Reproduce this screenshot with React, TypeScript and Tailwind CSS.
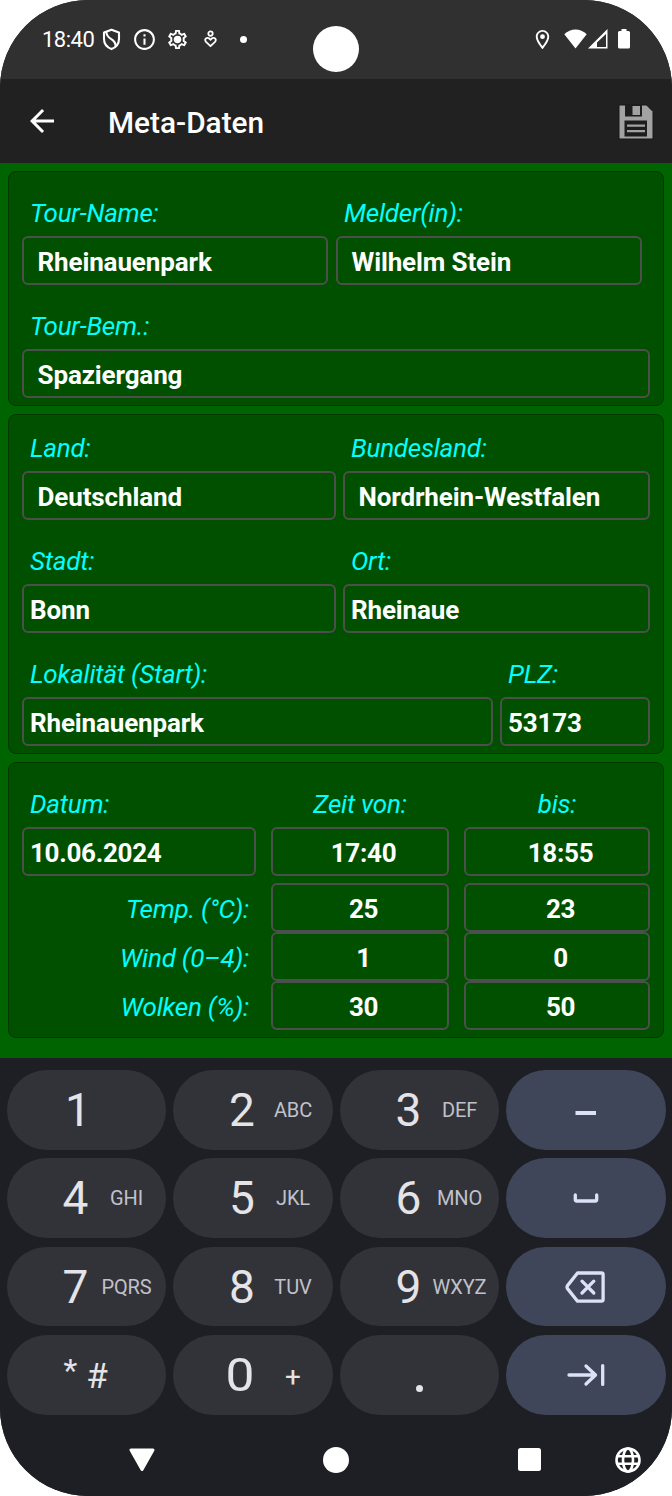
import type { ReactNode } from "react";
import { MdArrowBack, MdInfoOutline, MdOutlineLocationOn, MdOutlineSettings } from "react-icons/md";

function Slot({ children }: { children: ReactNode }) {
  return <span className="flex h-6 w-[33px] shrink-0 items-center justify-center">{children}</span>;
}

function ShieldIcon() {
  return (
    <svg width="19" height="23" viewBox="0 0 19 23" fill="none" stroke="currentColor" strokeWidth="2.1" strokeLinejoin="round">
      <path d="M9.5 1.8 17 4.6v6.2c0 4.8-3 8.6-7.5 10.3C5 19.4 2 15.6 2 10.8V4.6Z" />
      <path d="M4.3 4c.2 3.6 2 5.4 5 7.2 2.8 1.7 4.2 3.6 4.4 7" />
    </svg>
  );
}

function CareIcon() {
  return (
    <svg width="13" height="18" viewBox="0 0 13 18" fill="none" stroke="currentColor" strokeWidth="1.8">
      <circle cx="6.5" cy="3.6" r="2.2" />
      <path d="M6.5 16.2 2 11.8C.4 10 1.500 7.900 3.400 7.900c1.300 0 2.300.7 3.100 2 .8-1.300 1.800-2 3.100-2 1.900 0 3 2.100 1.400 3.900Z" strokeLinejoin="round" />
    </svg>
  );
}

function StatusBar() {
  return (
    <div className="relative flex h-[79px] shrink-0 items-start bg-[#303030] pl-[42px] text-white">
      <span className="mt-[26px] w-[53px] text-[22px] leading-[28px] tracking-[-0.5px]">18:40</span>
      <div className="mt-[27px] flex">
        <Slot><ShieldIcon /></Slot>
        <Slot><MdInfoOutline size={25} /></Slot>
        <Slot>
          <span className="relative flex items-center justify-center">
            <MdOutlineSettings size={23} />
            <span className="absolute size-[6px] rounded-full bg-white" />
          </span>
        </Slot>
        <Slot><CareIcon /></Slot>
        <Slot><span className="size-[7px] rounded-full bg-white" /></Slot>
      </div>
      <div className="mt-[27px] mr-[41px] ml-auto flex h-6 items-center">
        <MdOutlineLocationOn size={23} />
        <svg className="ml-[10px]" width="23" height="20" viewBox="0 0 23 20" fill="currentColor">
          <path d="M11.500 19.500.3 5.300C3.500 2.200 7.300.5 11.500.5s8 1.700 11.200 4.800Z" />
        </svg>
        <svg className="ml-[1px]" width="20" height="20" viewBox="0 0 20 20" fill="currentColor">
          <path fillRule="evenodd" d="M0 19.500 19.500 0v19.500ZM9 18h9V5L9 13.500Z" />
        </svg>
        <svg className="ml-[9px]" width="14" height="20" viewBox="0 0 14 20" fill="currentColor">
          <path d="M4.500 0h5v2h2q1.500 0 1.500 1.500v14.500q0 1.500-1.500 1.500h-9Q1 19.500 1 18V3.500Q1 2 2.500 2h2Z" />
        </svg>
      </div>
      <span className="absolute top-[26px] left-[313px] size-[46px] rounded-full bg-white" />
    </div>
  );
}

function SaveIcon() {
  return (
    <svg width="36" height="36" viewBox="0 0 36 36">
      <path d="M1 1h27.500L35 7.500V35H1Z" fill="#a2a2a2" stroke="#161616" />
      <path d="M7 1h17v11.500H7Z" fill="#1d1d1d" />
      <path d="M14.500 2h7.500v9h-7.500Z" fill="#a2a2a2" />
      <path d="M6.500 16.500H29V32.500H6.500Z" fill="#1d1d1d" />
      <path d="M9 21.700h18M9 27.200h18" stroke="#a2a2a2" strokeWidth="2.200" />
    </svg>
  );
}

function Toolbar() {
  return (
    <header className="flex h-[84px] shrink-0 items-center bg-[#212121] pr-[18px] pl-[24px] text-white">
      <MdArrowBack size={36} />
      <h1 className="ml-[48px] pt-[3px] text-[29.800px] leading-9 font-medium">Meta-Daten</h1>
      <span className="ml-auto pt-px"><SaveIcon /></span>
    </header>
  );
}

function Box({ children, className = "" }: { children: ReactNode; className?: string }) {
  return (
    <div className={`flex h-[49px] shrink-0 items-center rounded-[6px] border-2 border-[#4c4f4c] pt-[2px] font-bold text-white ${className}`}>
      {children}
    </div>
  );
}

function Label({ children, className = "" }: { children: ReactNode; className?: string }) {
  return <div className={`h-8 tracking-[-0.24px] whitespace-nowrap text-[#00ffff] italic ${className}`}>{children}</div>;
}

function Field({ label, value, className, indent = false }: { label: string; value: string; className: string; indent?: boolean }) {
  return (
    <div className={`flex shrink-0 flex-col gap-[7px] ${className}`}>
      <Label className="pl-2">{label}</Label>
      <Box className={indent ? "pl-[13.500px] tracking-[-0.12px]" : "pl-[6px] tracking-[-0.15px]"}>{value}</Box>
    </div>
  );
}

function Panel({ children, className }: { children: ReactNode; className: string }) {
  return (
    <section className={`flex shrink-0 flex-col rounded-lg border border-[#003600] bg-[#005000] pl-[13px] text-[26px] leading-8 ${className}`}>
      {children}
    </section>
  );
}

function Measure({ label, from, to }: { label: string; from: string; to: string }) {
  return (
    <div className="flex items-center">
      <Label className="mt-[2px] w-[249px] pr-[22px] text-right">{label}</Label>
      <Box className="w-[178px] justify-center pl-[7px] tracking-[-0.3px]">{from}</Box>
      <Box className="ml-[15px] w-[186px] justify-center pl-[7px] tracking-[-0.3px]">{to}</Box>
    </div>
  );
}

function Key({
  digit,
  letters,
  digitClass = "",
  lettersClass = "text-[20px] text-[#c0c1ca]",
}: {
  digit: string;
  letters?: string;
  digitClass?: string;
  lettersClass?: string;
}) {
  return (
    <button className="flex h-[79.500px] items-center rounded-[40px] bg-[#323338] pl-[50px]">
      <span className={`w-[38px] text-center text-[46px] leading-none text-[#e3e3e8] ${digitClass}`}>{digit}</span>
      <span className={`w-[64px] text-center tracking-[-0.1px] ${lettersClass}`}>{letters}</span>
    </button>
  );
}

function ActionKey({ children }: { children: ReactNode }) {
  return (
    <button className="flex h-[79.500px] items-center justify-center rounded-[40px] bg-[#404659] text-[#dce1f9]">
      <svg width="42" height="36" viewBox="0 0 42 36" fill="none" stroke="currentColor" strokeWidth="3.300" strokeLinecap="round" strokeLinejoin="round">
        {children}
      </svg>
    </button>
  );
}

function Keyboard() {
  return (
    <div className="flex grow flex-col bg-[#1e1f25] pt-3">
      <div className="grid grid-cols-4 gap-x-[7px] gap-y-[8.900px] pr-[6.500px] pl-[6.500px]">
        <Key digit="1" digitClass="pl-[5px]" />
        <Key digit="2" letters="ABC" />
        <Key digit="3" letters="DEF" />
        <ActionKey><path d="M10.500 21h20.500" strokeLinecap="butt" strokeWidth="4" /></ActionKey>
        <Key digit="4" letters="GHI" />
        <Key digit="5" letters="JKL" />
        <Key digit="6" letters="MNO" />
        <ActionKey><path d="M10.300 15v4.500q0 1.500 1.500 1.500h18.400q1.500 0 1.500-1.500V15" /></ActionKey>
        <Key digit="7" letters="PQRS" />
        <Key digit="8" letters="TUV" />
        <Key digit="9" letters="WXYZ" />
        <ActionKey>
          <path d="M12.500 4h24q1.600 0 1.600 1.600v25q0 1.600-1.600 1.600h-24L2.500 19.600q-1-1.500 0-3Z" />
          <path d="m17 12.200 11.800 11.800M28.800 12.200 17 24" />
        </ActionKey>
        <button className="flex h-[79.500px] items-center rounded-[40px] bg-[#323338] pl-[57px] text-[#e3e3e8]">
          <span className="pb-[10px] text-[32px] leading-none">*</span>
          <span className="pt-[3px] pl-[9px] text-[35px] leading-none">#</span>
        </button>
        <Key digit="0" digitClass="scale-x-112 -ml-[2px] mr-[2px]" letters="+" lettersClass="pt-1 text-[28px] text-[#e3e3e8]" />
        <button className="flex h-[79.500px] items-center justify-center rounded-[40px] bg-[#323338] pt-[27px]">
          <span className="size-[7px] rounded-full bg-[#e3e3e8]" />
        </button>
        <ActionKey>
          <path d="M4 18h26.500M21 9l9.500 9-9.500 9M37.700 8.600v18.800" />
        </ActionKey>
      </div>
      <nav className="mt-[32.300px] flex h-[26px] items-center pl-[129px] text-white">
        <svg width="26" height="24" viewBox="0 0 26 24" fill="currentColor" stroke="currentColor" strokeWidth="3" strokeLinejoin="round">
          <path d="M2 2h22L13 21.500Z" />
        </svg>
        <span className="ml-[167.500px] size-[26px] rounded-full bg-white" />
        <span className="ml-[169.500px] size-[23px] rounded-[2.500px] bg-white" />
        <svg className="ml-[74px]" width="26" height="26" viewBox="0 0 26 26" fill="none" stroke="currentColor" strokeWidth="2.600">
          <circle cx="13" cy="13" r="11.500" />
          <ellipse cx="13" cy="13" rx="5" ry="11.500" />
          <path d="M2 9.300h22M2 16.700h22" />
        </svg>
      </nav>
    </div>
  );
}

export default function App() {
  return (
    <div className="flex h-[1496px] w-[672px] flex-col overflow-hidden rounded-[88px] bg-[#1e1f25] font-['Roboto','Liberation_Sans',sans-serif]">
      <StatusBar />
      <Toolbar />
      <main className="flex h-[895px] shrink-0 flex-col gap-2 bg-[#006400] px-2 pt-2">
        <Panel className="h-[235px] gap-[25px] pt-[25px]">
          <div className="flex gap-2">
            <Field className="w-[306px]" label="Tour-Name:" value="Rheinauenpark" indent />
            <Field className="w-[306px]" label="Melder(in):" value="Wilhelm Stein" indent />
          </div>
          <Field className="w-[628px]" label="Tour-Bem.:" value="Spaziergang" indent />
        </Panel>
        <Panel className="h-[340px] gap-[25px] pt-[17px]">
          <div className="flex gap-[7px]">
            <Field className="w-[314px]" label="Land:" value="Deutschland" indent />
            <Field className="w-[307px]" label="Bundesland:" value="Nordrhein-Westfalen" indent />
          </div>
          <div className="flex gap-[7px]">
            <Field className="w-[314px]" label="Stadt:" value="Bonn" />
            <Field className="w-[307px]" label="Ort:" value="Rheinaue" />
          </div>
          <div className="flex gap-[7px]">
            <Field className="w-[471px]" label="Lokalität (Start):" value="Rheinauenpark" />
            <Field className="w-[150px]" label="PLZ:" value="53173" />
          </div>
        </Panel>
        <Panel className="h-[276px] pt-[25px]">
          <div className="flex">
            <Label className="w-[249px] pl-2">Datum:</Label>
            <Label className="w-[178px] text-center">Zeit von:</Label>
            <Label className="ml-[15px] w-[186px] text-center">bis:</Label>
          </div>
          <div className="mt-[7px] mb-[7px] flex">
            <Box className="w-[234px] pl-[6px] tracking-[-0.3px]">10.06.2024</Box>
            <Box className="ml-[15px] w-[178px] justify-center pl-[7px] tracking-[-0.3px]">17:40</Box>
            <Box className="ml-[15px] w-[186px] justify-center pl-[7px] tracking-[-0.3px]">18:55</Box>
          </div>
          <Measure label="Temp. (°C):" from="25" to="23" />
          <Measure label="Wind (0–4):" from="1" to="0" />
          <Measure label="Wolken (%):" from="30" to="50" />
        </Panel>
      </main>
      <Keyboard />
    </div>
  );
}
